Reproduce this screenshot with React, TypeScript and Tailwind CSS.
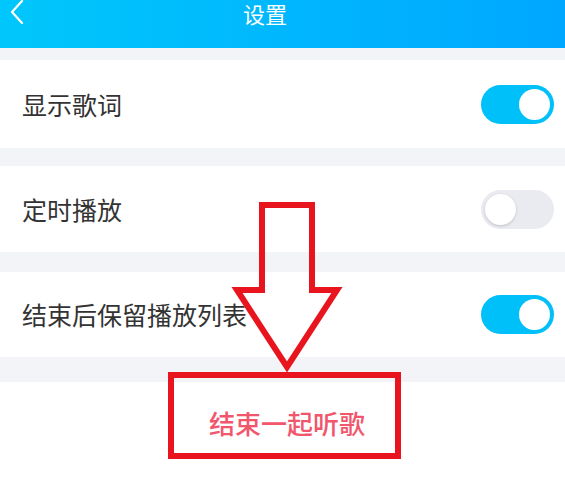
import React from "react";

const Toggle = ({ on }: { on: boolean }) => (
  <div
    className={
      on
        ? "w-[73px] h-[39px] rounded-full bg-[#00c0f9] flex items-center justify-end pr-[4px]"
        : "w-[73px] h-[39px] rounded-full bg-[#e9ebf0] flex items-center justify-start pl-[4px]"
    }
  >
    <div
      className={
        on
          ? "w-[31px] h-[31px] rounded-full bg-white"
          : "w-[31px] h-[31px] rounded-full bg-white shadow-[0_1px_3px_rgba(0,0,0,0.18)]"
      }
    />
  </div>
);

const Row = ({ label, on, h }: { label: string; on: boolean; h: string }) => (
  <div className={`${h} bg-white flex items-center justify-between pl-[22px] pr-[11px]`}>
    <span className="text-[25px] text-[#333333] leading-none">{label}</span>
    <Toggle on={on} />
  </div>
);

export default function App() {
  return (
    <div
      className="relative w-[565px] h-[480px] overflow-hidden bg-white flex flex-col"
      style={{ fontFamily: '"Noto Sans CJK SC", "Noto Sans", sans-serif' }}
    >
      {/* header */}
      <div className="h-[48px] shrink-0 bg-gradient-to-r from-[#00c7fb] to-[#00a7ff] relative">
        <svg className="absolute left-[9px] top-0" width="16" height="26" viewBox="0 0 16 26">
          <path d="M13 1 L3 12 L13 23" fill="none" stroke="white" strokeWidth="2.2" strokeLinecap="round" strokeLinejoin="round" />
        </svg>
        <div className="text-center text-white text-[22px] leading-[26px] pr-[35px]">设置</div>
      </div>

      <div className="h-[12px] shrink-0 bg-[#f3f4f7]" />
      <Row label="显示歌词" on h="h-[88px]" />
      <div className="h-[18px] shrink-0 bg-[#f3f4f7]" />
      <Row label="定时播放" on={false} h="h-[86px]" />
      <div className="h-[20px] shrink-0 bg-[#f3f4f7]" />
      <Row label="结束后保留播放列表" on h="h-[85px]" />
      <div className="h-[25px] shrink-0 bg-[#f3f4f7]" />

      <div className="flex-1 bg-white flex justify-center pt-[25px] pl-[9px]">
        <span className="text-[26px] leading-[32px] font-medium text-[#f2566c]">结束一起听歌</span>
      </div>

      {/* annotation overlay */}
      <svg className="absolute left-0 top-0 pointer-events-none" width="565" height="480" viewBox="0 0 565 480">
        <polygon
          points="262,205 312,205 312,290 337,290 287,367 237,290 262,290"
          fill="none"
          stroke="#e8141e"
          strokeWidth="6"
          strokeLinejoin="miter"
        />
        <rect x="171" y="375" width="227" height="81" fill="none" stroke="#e8141e" strokeWidth="6" />
      </svg>
    </div>
  );
}
